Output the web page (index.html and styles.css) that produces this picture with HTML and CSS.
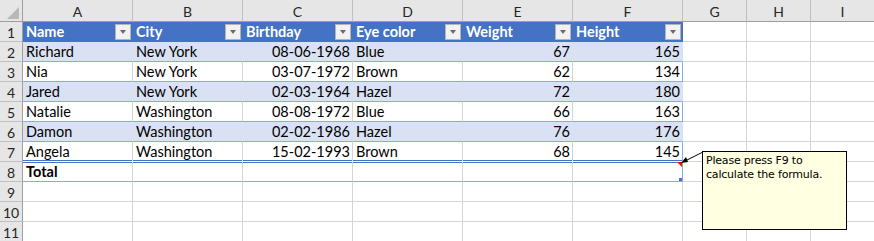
FILE: index.html
```html
<!DOCTYPE html>
<html>

<head>
    <title>People</title>
    <meta name="viewport" content="width=device-width, initial-scale=1">
    <link rel="stylesheet" href="styles.css">
</head>

<body>
    <div class="sheet">
        <div class="row col-heads">
            <div class="cell corner"><span class="select-all"></span></div>
            <div class="cell">A</div>
            <div class="cell">B</div>
            <div class="cell">C</div>
            <div class="cell">D</div>
            <div class="cell">E</div>
            <div class="cell">F</div>
            <div class="cell">G</div>
            <div class="cell">H</div>
            <div class="cell">I</div>
        </div>

        <div class="row table-head">
            <div class="cell num">1</div>
            <div class="cell">Name<span class="filter"></span></div>
            <div class="cell">City<span class="filter"></span></div>
            <div class="cell">Birthday<span class="filter"></span></div>
            <div class="cell">Eye color<span class="filter"></span></div>
            <div class="cell">Weight<span class="filter"></span></div>
            <div class="cell last">Height<span class="filter"></span></div>
            <div class="cell"></div>
            <div class="cell"></div>
            <div class="cell"></div>
        </div>

        <div class="row data band">
            <div class="cell num">2</div>
            <div class="cell">Richard</div>
            <div class="cell">New York</div>
            <div class="cell right">08-06-1968</div>
            <div class="cell">Blue</div>
            <div class="cell right">67</div>
            <div class="cell right last">165</div>
            <div class="cell"></div>
            <div class="cell"></div>
            <div class="cell"></div>
        </div>

        <div class="row data">
            <div class="cell num">3</div>
            <div class="cell">Nia</div>
            <div class="cell">New York</div>
            <div class="cell right">03-07-1972</div>
            <div class="cell">Brown</div>
            <div class="cell right">62</div>
            <div class="cell right last">134</div>
            <div class="cell"></div>
            <div class="cell"></div>
            <div class="cell"></div>
        </div>

        <div class="row data band">
            <div class="cell num">4</div>
            <div class="cell">Jared</div>
            <div class="cell">New York</div>
            <div class="cell right">02-03-1964</div>
            <div class="cell">Hazel</div>
            <div class="cell right">72</div>
            <div class="cell right last">180</div>
            <div class="cell"></div>
            <div class="cell"></div>
            <div class="cell"></div>
        </div>

        <div class="row data">
            <div class="cell num">5</div>
            <div class="cell">Natalie</div>
            <div class="cell">Washington</div>
            <div class="cell right">08-08-1972</div>
            <div class="cell">Blue</div>
            <div class="cell right">66</div>
            <div class="cell right last">163</div>
            <div class="cell"></div>
            <div class="cell"></div>
            <div class="cell"></div>
        </div>

        <div class="row data band">
            <div class="cell num">6</div>
            <div class="cell">Damon</div>
            <div class="cell">Washington</div>
            <div class="cell right">02-02-1986</div>
            <div class="cell">Hazel</div>
            <div class="cell right">76</div>
            <div class="cell right last">176</div>
            <div class="cell"></div>
            <div class="cell"></div>
            <div class="cell"></div>
        </div>

        <div class="row data before-total">
            <div class="cell num">7</div>
            <div class="cell">Angela</div>
            <div class="cell">Washington</div>
            <div class="cell right">15-02-1993</div>
            <div class="cell">Brown</div>
            <div class="cell right">68</div>
            <div class="cell right last">145</div>
            <div class="cell"></div>
            <div class="cell"></div>
            <div class="cell"></div>
        </div>

        <div class="row data total">
            <div class="cell num">8</div>
            <div class="cell"><b>Total</b></div>
            <div class="cell"></div>
            <div class="cell"></div>
            <div class="cell"></div>
            <div class="cell"></div>
            <div class="cell last has-note"><span class="resize-handle"></span></div>
            <div class="cell"></div>
            <div class="cell"></div>
            <div class="cell"></div>
        </div>

        <div class="row">
            <div class="cell num">9</div>
            <div class="cell"></div><div class="cell"></div><div class="cell"></div>
            <div class="cell"></div><div class="cell"></div><div class="cell"></div>
            <div class="cell"></div><div class="cell"></div><div class="cell"></div>
        </div>

        <div class="row">
            <div class="cell num">10</div>
            <div class="cell"></div><div class="cell"></div><div class="cell"></div>
            <div class="cell"></div><div class="cell"></div><div class="cell"></div>
            <div class="cell"></div><div class="cell"></div><div class="cell"></div>
        </div>

        <div class="row">
            <div class="cell num">11</div>
            <div class="cell"></div><div class="cell"></div><div class="cell"></div>
            <div class="cell"></div><div class="cell"></div><div class="cell"></div>
            <div class="cell"></div><div class="cell"></div><div class="cell"></div>
        </div>

        <!-- note on F8 -->
        <svg class="note-arrow" width="24" height="14" viewBox="0 0 24 14">
            <line x1="22" y1="1" x2="4" y2="10" stroke="#000" stroke-width="1" />
            <polygon points="0,12 5,6 7,11" fill="#000" />
        </svg>
        <div class="note">Please press F9 to calculate the formula.</div>
    </div>
</body>

</html>
```

FILE: styles.css
```css
body {
    margin: 0;
    padding: 0;
    background-color: #fff;
    font-family: Lato, "Liberation Sans", sans-serif;
    font-size: 14.5px;
    color: #000;
    overflow: hidden;
}

.sheet {
    position: relative;
    width: 874px;
    height: 241px;
    overflow: hidden;
}

.row {
    display: grid;
    grid-template-columns: 23px repeat(6, 110px) repeat(3, 64px);
    height: 20px;
}

.cell {
    position: relative;
    box-sizing: border-box;
    display: flex;
    align-items: center;
    padding: 0 2px 0 3px;
    border-right: 1px solid #d4d4d4;
    border-bottom: 1px solid #d4d4d4;
    white-space: nowrap;
    overflow: hidden;
    line-height: 19px;
}

.cell.right {
    justify-content: flex-end;
}

/* column letters */
.col-heads {
    height: 22px;
}

.col-heads .cell {
    justify-content: center;
    background-color: #e6e6e6;
    border-right-color: #c0c0c0;
    border-bottom-color: #9e9e9e;
    color: #262626;
    font-size: 14px;
    padding: 1px 0 0 0;
}

.col-heads .corner {
    justify-content: flex-end;
    align-items: flex-end;
    border-right-color: #9e9e9e;
    padding: 0 3px 2px 0;
}

.select-all {
    width: 0;
    height: 0;
    border-left: 12px solid transparent;
    border-bottom: 12px solid #b8b8b8;
}

/* row numbers */
.cell.num {
    justify-content: center;
    padding: 1px 0 0 0;
    background-color: #e6e6e6;
    border-right-color: #9e9e9e;
    border-bottom-color: #c0c0c0;
    color: #262626;
    font-size: 14px;
}

/* table header */
.table-head .cell:not(.num) {
    justify-content: space-between;
    padding-right: 1px;
}

.table-head .cell:nth-child(-n+7):not(.num) {
    background-color: #4472c4;
    border-color: #4472c4;
    color: #fff;
    font-weight: bold;
}

.filter {
    position: relative;
    flex: none;
    box-sizing: border-box;
    width: 16px;
    height: 16px;
    background-color: #f2f2f2;
    border: 1px solid #b4b4b4;
}

.filter::after {
    content: "";
    position: absolute;
    left: 4px;
    top: 5px;
    border-left: 3.5px solid transparent;
    border-right: 3.5px solid transparent;
    border-top: 4px solid #6a6a6a;
}

/* table body */
.data .cell:nth-child(-n+7):not(.num) {
    border-bottom-color: #8ea9db;
}

.data .cell.last {
    border-right-color: #8ea9db;
}

.table-head .cell.last {
    border-right-color: #4472c4;
}

.band .cell:nth-child(-n+7):not(.num) {
    background-color: #d9e1f2;
    border-right-color: #d9e1f2;
}

.band .cell.last {
    border-right-color: #8ea9db;
}

/* double rule above the total row */
.before-total .cell:nth-child(-n+7):not(.num) {
    border-bottom-color: #fff;
    box-shadow: inset 0 -1px 0 #4472c4;
}

.total .cell:nth-child(-n+7):not(.num) {
    box-shadow: inset 0 1px 0 #4472c4;
}

.has-note::before {
    content: "";
    position: absolute;
    top: 0;
    right: 0;
    border-left: 5px solid transparent;
    border-top: 5px solid #ff0000;
}

.resize-handle {
    position: absolute;
    right: 0;
    bottom: 0;
    width: 3px;
    height: 3px;
    background-color: #4472c4;
}

/* comment */
.note-arrow {
    position: absolute;
    left: 681px;
    top: 151px;
}

.note {
    position: absolute;
    left: 702px;
    top: 151px;
    box-sizing: border-box;
    width: 145px;
    height: 79px;
    padding: 2px 3px;
    background-color: #ffffe1;
    border: 1px solid #000;
    font-family: "DejaVu Sans", sans-serif;
    font-size: 11px;
    letter-spacing: -0.2px;
    line-height: 14px;
    color: #000;
}
```
